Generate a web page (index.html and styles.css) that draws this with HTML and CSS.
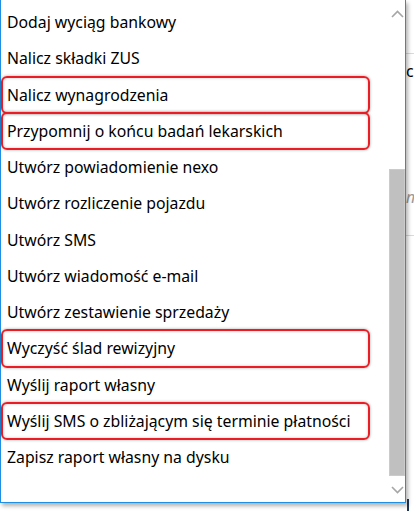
FILE: index.html
```html
<!DOCTYPE html>
<html lang="pl">
<head>
    <meta charset="UTF-8">
    <meta name="viewport" content="width=device-width, initial-scale=1.0">
    <title>Działania</title>
    <link rel="stylesheet" href="styles.css">
</head>
<body>
    <div class="screen">
        <!-- page behind the open dropdown -->
        <div class="under">
            <div class="under-rule"></div>
            <div class="under-text">ci</div>
            <div class="under-hint">n</div>
            <div class="under-rule under-rule-low"></div>
            <div class="under-foot">
                <div class="under-link">Pokaż historię wykonanych działań w harmonogramie</div>
                <div class="under-corner"></div>
            </div>
        </div>

        <div class="menu">
            <ul class="list">
                <li class="item">Dodaj wyciąg bankowy</li>
                <li class="item">Nalicz składki ZUS</li>
                <li class="item marked">Nalicz wynagrodzenia</li>
                <li class="item marked">Przypomnij o końcu badań lekarskich</li>
                <li class="item">Utwórz powiadomienie nexo</li>
                <li class="item">Utwórz rozliczenie pojazdu</li>
                <li class="item">Utwórz SMS</li>
                <li class="item">Utwórz wiadomość e-mail</li>
                <li class="item">Utwórz zestawienie sprzedaży</li>
                <li class="item marked">Wyczyść ślad rewizyjny</li>
                <li class="item">Wyślij raport własny</li>
                <li class="item marked">Wyślij SMS o zbliżającym się terminie płatności</li>
                <li class="item">Zapisz raport własny na dysku</li>
            </ul>
            <div class="scroll">
                <div class="sb-btn">
                    <svg width="16" height="24" viewBox="0 0 16 24"><polyline points="3,17 8.5,11.5 14,17" fill="none" stroke="#a6a6a6" stroke-width="1.6"/></svg>
                </div>
                <div class="sb-track">
                    <div class="sb-thumb" style="margin-top: 145px; height: 307px;"></div>
                </div>
                <div class="sb-btn">
                    <svg width="16" height="24" viewBox="0 0 16 24"><polyline points="3,9 8.5,14.5 14,9" fill="none" stroke="#a6a6a6" stroke-width="1.6"/></svg>
                </div>
            </div>
        </div>
    </div>
</body>
</html>
```

FILE: styles.css
```css
body {
    margin: 0;
    padding: 0;
    background-color: #fff;
    font-family: "Noto Sans", "Open Sans", sans-serif;
    overflow: hidden;
}

.screen {
    position: relative;
    width: 414px;
    height: 511px;
    overflow: hidden;
    background-color: #fff;
}

/* page under the dropdown, only a strip of it shows */
.under {
    padding-top: 53px;
    font-size: 15.8px;
    line-height: 20px;
    white-space: nowrap;
}

.under-rule {
    margin-left: 406px;
    height: 1px;
    background-color: #dadada;
}

.under-rule-low {
    margin-top: 28px;
}

.under-text {
    margin: 7px 0 0 406px;
    color: #000;
}

.under-hint {
    margin: 106px 0 0 406px;
    color: #9a9a9a;
    font-style: italic;
}

.under-foot {
    display: flex;
    margin-top: 263px;
    height: 12px;
}

.under-link {
    width: 330px;
    padding: 9px 0 0 77px;
    color: #1a56c2;
}

.under-corner {
    width: 8px;
    border-left: 2px solid #1f3556;
}

/* dropdown */
.menu {
    position: absolute;
    left: 0;
    top: 0;
    width: 404px;
    height: 502px;
    display: flex;
    background-color: #fff;
    border: 1px solid #1e8fe2;
    border-top: none;
    box-shadow: 2px 3px 4px rgba(0, 0, 0, 0.3);
}

.list {
    flex: 1;
    margin: 0;
    padding: 4px 0 0 0;
    list-style: none;
}

.item {
    position: relative;
    height: 36.25px;
    line-height: 36.25px;
    padding-left: 6px;
    font-size: 15.8px;
    color: #000;
    white-space: nowrap;
}

/* red annotation frames */
.item.marked::after {
    content: "";
    position: absolute;
    left: 0;
    right: 19px;
    top: -1px;
    bottom: -1px;
    border: 2px solid #ec1c24;
    border-radius: 6px;
    box-shadow: 0 0 3px rgba(0, 0, 0, 0.35), inset 0 0 3px rgba(0, 0, 0, 0.22);
}

.scroll {
    width: 16px;
    display: flex;
    flex-direction: column;
}

.sb-btn {
    height: 24px;
}

.sb-btn svg {
    display: block;
}

.sb-track {
    flex: 1;
}

.sb-thumb {
    background-color: #c0c0c0;
    box-shadow: inset 0 0 0 1px #cbcbcb;
}
```
